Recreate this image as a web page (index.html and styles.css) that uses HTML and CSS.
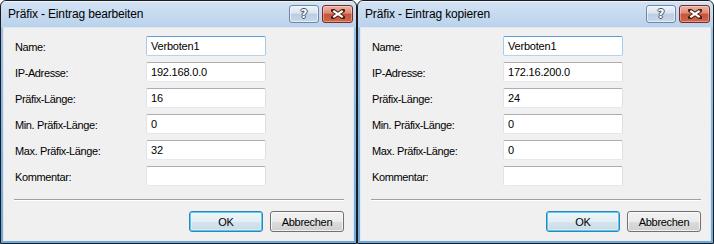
FILE: index.html
```html
<!DOCTYPE html>
<html lang="de">
<head>
<meta charset="utf-8">
<title>Präfix</title>
<link rel="stylesheet" href="styles.css">
</head>
<body>
<div class="desk">
  <section class="dialog">
    <header class="titlebar">
      <span class="title">Präfix - Eintrag bearbeiten</span>
      <div class="caption-btns">
        <span class="cbtn help"><span class="q">?</span></span>
        <span class="cbtn close"><svg width="14" height="10" viewBox="0 0 14 10"><path d="M2 1.5 L12 8.5 M12 1.5 L2 8.5" stroke="#4b1d12" stroke-width="4" stroke-linecap="square"/><path d="M2.3 1.8 L11.7 8.2 M11.7 1.8 L2.3 8.2" stroke="#fff" stroke-width="2.2" stroke-linecap="butt"/></svg></span>
      </div>
    </header>
    <div class="client">
      <div class="form">
        <label>Name:</label><input class="field focus" value="Verboten1" readonly>
        <label>IP-Adresse:</label><input class="field" value="192.168.0.0" readonly>
        <label>Präfix-Länge:</label><input class="field" value="16" readonly>
        <label>Min. Präfix-Länge:</label><input class="field" value="0" readonly>
        <label>Max. Präfix-Länge:</label><input class="field" value="32" readonly>
        <label>Kommentar:</label><input class="field" value="" readonly>
      </div>
      <div class="sep"></div>
      <div class="actions">
        <button class="btn default">OK</button>
        <button class="btn">Abbrechen</button>
      </div>
    </div>
  </section>
  <section class="dialog">
    <header class="titlebar">
      <span class="title">Präfix - Eintrag kopieren</span>
      <div class="caption-btns">
        <span class="cbtn help"><span class="q">?</span></span>
        <span class="cbtn close"><svg width="14" height="10" viewBox="0 0 14 10"><path d="M2 1.5 L12 8.5 M12 1.5 L2 8.5" stroke="#4b1d12" stroke-width="4" stroke-linecap="square"/><path d="M2.3 1.8 L11.7 8.2 M11.7 1.8 L2.3 8.2" stroke="#fff" stroke-width="2.2" stroke-linecap="butt"/></svg></span>
      </div>
    </header>
    <div class="client">
      <div class="form">
        <label>Name:</label><input class="field focus" value="Verboten1" readonly>
        <label>IP-Adresse:</label><input class="field" value="172.16.200.0" readonly>
        <label>Präfix-Länge:</label><input class="field" value="24" readonly>
        <label>Min. Präfix-Länge:</label><input class="field" value="0" readonly>
        <label>Max. Präfix-Länge:</label><input class="field" value="0" readonly>
        <label>Kommentar:</label><input class="field" value="" readonly>
      </div>
      <div class="sep"></div>
      <div class="actions">
        <button class="btn default">OK</button>
        <button class="btn">Abbrechen</button>
      </div>
    </div>
  </section>
</div>
</body>
</html>
```
FILE: styles.css
```css
* { box-sizing: border-box; }
html, body { margin: 0; padding: 0; background: #ffffff; }
body {
  font-family: "Liberation Sans", Arial, sans-serif;
  font-size: 11px;
  color: #000;
}
.desk {
  display: flex;
  width: 714px;
  height: 244px;
}
.dialog {
  width: 357px;
  height: 244px;
  border: 1px solid #1c1c1c;
  border-radius: 6px 6px 0 0;
  background: linear-gradient(#d3e3f4, #bad2ec 26px, #9cc1e6 27px, #6fa9dc);
  display: flex;
  flex-direction: column;
  overflow: hidden;
}
.titlebar {
  height: 26px;
  flex: none;
  display: flex;
  justify-content: space-between;
  align-items: flex-start;
  padding: 0 3px 0 7px;
  border-top: 1px solid rgba(255,255,255,0.6);
}
.title {
  font-size: 12px;
  letter-spacing: -0.15px;
  line-height: 25px;
  color: #000;
}
.caption-btns {
  display: flex;
  gap: 3px;
  margin-top: 3px;
}
.cbtn {
  height: 18px;
  border-radius: 3px;
  display: flex;
  align-items: center;
  justify-content: center;
}
.help {
  width: 30px;
  border: 1px solid #6c87a8;
  background: linear-gradient(#eef3f9, #d9e4f1 45%, #bccde2 50%, #c9d9ec);
  box-shadow: inset 0 0 0 1px rgba(255,255,255,0.55);
}
.q {
  font-family: "DejaVu Sans", sans-serif;
  font-weight: bold;
  font-size: 12px;
  line-height: 12px;
  color: #fff;
  text-shadow: 1px 0 0 #3e5068, -1px 0 0 #3e5068, 0 1px 0 #3e5068, 0 -1px 0 #3e5068;
}
.close {
  width: 31px;
  border: 1px solid #7d2a1c;
  background: linear-gradient(#eab3a6, #dc8a76 45%, #c6533d 50%, #d0664c);
  box-shadow: inset 0 0 0 1px rgba(255,255,255,0.35);
}
.client {
  flex: 1;
  margin: 0 2px 2px;
  background: #f0f0f0;
  border: 1px solid #dce8f5;
  border-bottom-color: #e6eef7;
  padding: 8px 9px 0 11px;
  display: flex;
  flex-direction: column;
}
.form {
  display: grid;
  grid-template-columns: 131px 120px;
  grid-auto-rows: 20px;
  row-gap: 6px;
}
.form label {
  align-self: center;
  letter-spacing: -0.38px;
  padding-top: 1px;
}
.field {
  width: 120px;
  height: 20px;
  margin: 0;
  padding: 0 0 0 4px;
  font: 11px "Liberation Sans", Arial, sans-serif;
  letter-spacing: -0.2px;
  color: #000;
  background: #fff;
  border: 1px solid;
  border-color: #abadb3 #dbdfe6 #e3e9ef #e2e3ea;
  border-radius: 2px;
  outline: none;
}
.field.focus {
  border-color: #5d9cd8 #a9cbea #b5d3ee #a9cbea;
}
.sep {
  margin: 13px 0 0 -1px;
  height: 2px;
  border-top: 1px solid #a0a0a0;
  border-bottom: 1px solid #ffffff;
}
.actions {
  display: flex;
  justify-content: flex-end;
  gap: 7px;
  margin-top: 10px;
}
.btn {
  width: 74px;
  height: 21px;
  margin: 0;
  padding: 0;
  font: 11px "Liberation Sans", Arial, sans-serif;
  letter-spacing: -0.3px;
  color: #000;
  border: 1px solid #707070;
  border-radius: 3px;
  background: linear-gradient(#f2f2f2, #ebebeb 50%, #dddddd 50%, #cfcfcf);
  box-shadow: inset 0 0 0 1px rgba(255,255,255,0.7);
}
.btn.default {
  border-color: #3c7fb1;
  box-shadow: inset 0 0 0 1px #48d1f8, inset 0 0 0 2px rgba(255,255,255,0.3);
  background: linear-gradient(#eef5f9, #e4eef5 50%, #d6e4ee 50%, #cadbe7);
}
```
